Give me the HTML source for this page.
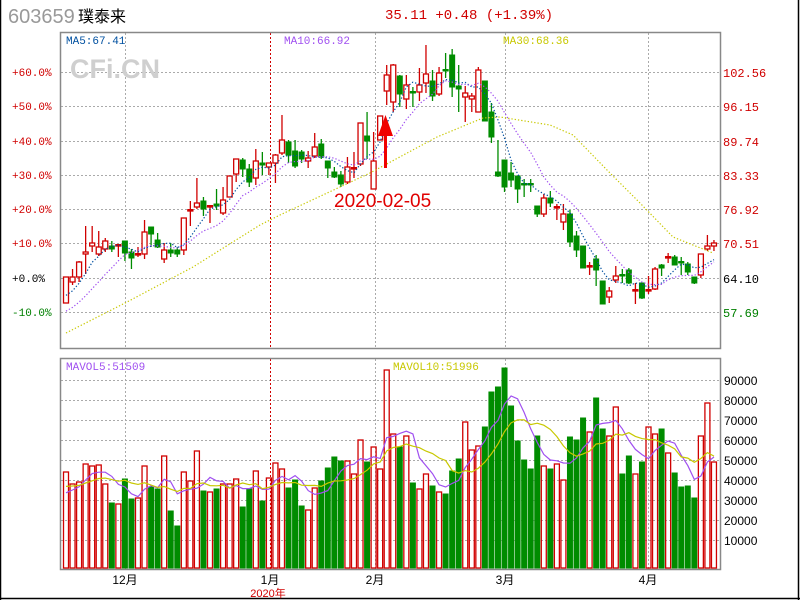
<!DOCTYPE html>
<html><head><meta charset="utf-8"><style>
html,body{margin:0;padding:0;background:#fff;}
body{width:800px;height:600px;overflow:hidden;position:relative;font-family:"Liberation Mono","Noto Sans CJK SC",monospace;}
svg{position:absolute;left:0;top:0;}
</style></head><body>
<svg id="s" width="800" height="600" xmlns="http://www.w3.org/2000/svg">
<rect x="0" y="0" width="800" height="600" fill="#fff"/>
<line x1="0.5" y1="0" x2="0.5" y2="600" stroke="#000" stroke-width="1.5"/>
<line x1="798.5" y1="0" x2="798.5" y2="600" stroke="#000" stroke-width="1.5"/>
<line x1="0" y1="598.5" x2="800" y2="598.5" stroke="#000" stroke-width="1.5"/>
<text x="8" y="23" font-family="Liberation Sans,sans-serif" font-size="20" fill="#999">603659</text>
<text x="78" y="22" font-family="Liberation Sans,'Noto Sans CJK SC',sans-serif" font-size="16" fill="#000">璞泰来</text>
<text x="385" y="19" font-family="Liberation Mono,monospace" font-size="14" fill="#d00000">35.11 +0.48 (+1.39%)</text>
<g id="grid" stroke="#aaa" stroke-dasharray="2 2" stroke-width="1"></g>
<rect x="60.5" y="32.5" width="660" height="316" fill="none" stroke="#888" stroke-width="1.5"/>
<rect x="60.5" y="358.5" width="660" height="211" fill="none" stroke="#888" stroke-width="1.5"/>
<text x="70" y="78" font-family="Liberation Sans,sans-serif" font-weight="bold" font-size="27" fill="#cfcfcf">CFi.CN</text>
<g font-family="Liberation Mono,monospace" font-size="11">
<text x="66" y="44" fill="#0050a0">MA5:67.41</text>
<text x="284" y="44" fill="#a050f0">MA10:66.92</text>
<text x="503" y="44" fill="#c8c800">MA30:68.36</text>
<text x="66" y="370" fill="#a050f0">MAVOL5:51509</text>
<text x="393" y="370" fill="#c8c800">MAVOL10:51996</text>
</g>
<g font-family="Liberation Mono,monospace" font-size="11" fill="#d00000">
<text x="12" y="76">+60.0%</text><text x="12" y="110">+50.0%</text><text x="12" y="145">+40.0%</text>
<text x="12" y="179">+30.0%</text><text x="12" y="213">+20.0%</text><text x="12" y="247">+10.0%</text>
<text x="12" y="282" fill="#000">+0.0%</text><text x="12" y="316" fill="#008000">-10.0%</text>
</g>
<g font-family="Liberation Mono,monospace" font-size="12" fill="#d00000">
<text x="723" y="77">102.56</text><text x="723" y="111">96.15</text><text x="723" y="146">89.74</text>
<text x="723" y="180">83.33</text><text x="723" y="214">76.92</text><text x="723" y="248">70.51</text>
<text x="723" y="283" fill="#000">64.10</text><text x="723" y="317" fill="#008000">57.69</text>
</g>
<g font-family="Liberation Sans,sans-serif" font-size="12" fill="#000">
<text x="724" y="385">90000</text><text x="724" y="405">80000</text><text x="724" y="425">70000</text>
<text x="724" y="445">60000</text><text x="724" y="465">50000</text><text x="724" y="485">40000</text>
<text x="724" y="505">30000</text><text x="724" y="525">20000</text><text x="724" y="545">10000</text>
</g>
<g font-family="Liberation Sans,'Noto Sans CJK SC',sans-serif" font-size="12" fill="#000" text-anchor="middle">
<text x="125" y="584">12月</text><text x="270" y="584">1月</text><text x="375" y="584">2月</text>
<text x="505" y="584">3月</text><text x="648" y="584">4月</text>
<text x="268" y="597" fill="#d00000" font-size="11">2020年</text>
</g>
<g id="plot"></g>
<text x="334" y="207" font-family="Liberation Sans,sans-serif" font-size="19" fill="#e00000">2020-02-05</text>
<line x1="385.5" y1="168" x2="385.5" y2="130" stroke="#f00000" stroke-width="3"/>
<polygon points="385.5,115 378,136 393,136" fill="#f00000"/>
</svg>
<script>
var NS="http://www.w3.org/2000/svg";
function el(p,t,a){var e=document.createElementNS(NS,t);for(var k in a)e.setAttribute(k,a[k]);p.appendChild(e);return e;}
var g=document.getElementById("grid");
[72,106,141,175,209,243,278,312].forEach(function(y){el(g,"line",{x1:61,x2:720,y1:y+.5,y2:y+.5});});
for(var i=0;i<9;i++){var y=380.5+i*20;el(g,"line",{x1:61,x2:720,y1:y,y2:y});}
[125,375,505,648].forEach(function(x){el(g,"line",{x1:x+.5,x2:x+.5,y1:33,y2:348});el(g,"line",{x1:x+.5,x2:x+.5,y1:359,y2:569});});
el(g,"line",{x1:270.5,x2:270.5,y1:33,y2:348,stroke:"#d00000"});
el(g,"line",{x1:270.5,x2:270.5,y1:359,y2:569,stroke:"#d00000"});
var C="R277,303,277,303 R277,282,269,285 R262,277,261,282 R252,254,226,274 R243,246,226,252 R247,254,231,256 R241,249,238,252 G246,249,241,252 R245,245,245,257 G241,253,241,261 G252,258,249,269 R254,254,247,257 R232,254,220,259 G227,234,227,247 G240,247,233,248 R250,259,243,263 G250,253,243,257 G250,254,247,257 R218,250,218,255 R210,210,201,226 R203,207,178,209 G201,209,197,216 R206,207,206,223 G204,206,189,210 R200,213,187,215 R176,197,176,197 R159,174,159,182 G160,169,158,177 G169,182,164,187 R161,178,149,185 G163,165,152,175 R163,167,163,175 R155,163,154,183 R140,153,115,155 G142,155,140,163 G151,166,140,168 G152,159,150,163 R158,161,151,168 R147,156,133,158 G144,157,139,159 G161,168,161,178 G172,177,167,178 G175,184,171,187 R167,182,157,184 R168,168,152,178 R123,164,123,166 G136,141,112,159 R161,189,132,189 R116,140,116,140 R75,91,65,105 R65,102,64,112 G76,94,75,107 R85,99,75,109 G92,92,87,107 R85,92,68,101 R74,83,45,93 G81,96,70,101 R73,94,67,96 G70,70,53,78 G55,87,49,97 G86,89,65,112 R93,97,86,122 R96,99,93,112 R70,112,67,112 G81,121,81,121 G112,137,103,143 G172,176,140,177 G160,187,160,192 G173,180,162,187 G176,189,176,203 G184,184,179,197 G184,184,179,192 G206,214,206,217 R198,214,194,217 G198,203,191,207 R207,207,204,220 R214,222,204,230 G214,242,210,247 G236,250,231,257 G246,268,246,268 R266,266,262,275 G259,270,255,286 G281,304,281,304 R291,297,287,303 R276,280,266,283 G275,275,269,283 G270,283,268,284 R290,290,283,304 G283,298,283,299 R290,290,276,294 R269,289,267,290 G265,268,264,276 R257,257,253,263 G257,265,255,265 G262,262,257,275 G264,272,262,275 G277,283,277,284 R254,275,254,278 R246,249,235,251 R243,246,240,251".split(" ");
var V=[472,484,482,464,466,465,484,503,504,479,499,498,466,487,489,456,511,526,472,481,451,491,492,489,484,484,479,507,489,471,501,478,463,469,488,480,506,510,488,481,468,457,461,461,474,440,462,447,469,370,434,447,436,483,489,474,486,492,494,471,459,422,450,446,427,392,387,368,406,441,460,469,436,466,469,464,480,437,440,418,432,398,429,436,407,474,456,474,462,427,434,429,453,473,487,486,498,436,403,462];
var P=document.getElementById("plot");
var RED="#d00000",GRN="#008c00",closes=[];
function X(i){return 66+i*6.545;}
C.forEach(function(s,i){
 var red=s[0]=="R",a=s.slice(1).split(",").map(Number),x=X(i),col=red?RED:GRN;
 closes.push(red?a[0]:a[1]);
 el(P,"line",{x1:x,x2:x,y1:a[2],y2:a[3],stroke:col,"stroke-width":1.3});
 var h=Math.max(a[1]-a[0],1);
 if(red) el(P,"rect",{x:x-2.5,y:a[0],width:5,height:h,fill:"#fff",stroke:col,"stroke-width":1.3});
 else el(P,"rect",{x:x-3,y:a[0]-.5,width:6,height:h+1,fill:col});
 if(a[1]-a[0]<2) el(P,"line",{x1:x-3,x2:x+3,y1:a[0],y2:a[0],stroke:col,"stroke-width":2});
 var vt=V[i]!==undefined?V[i]:480;
 if(red) el(P,"rect",{x:x-2.5,y:vt,width:5,height:568-vt,fill:"none",stroke:col,"stroke-width":1.3});
 else el(P,"rect",{x:x-3,y:vt-.5,width:6,height:569-vt,fill:col});
});
function ma(arr,n,base){return arr.map(function(v,i){var s=0,c=0;for(var j=Math.max(0,i-n+1);j<=i;j++){s+=arr[j];c++;}var av=s/c;if(base!==undefined&&c<n){av=(s+(n-c)*base)/n;}return av;});}
function poly(pts,col,dash,w){el(P,"polyline",{points:pts.map(function(y,i){return X(i).toFixed(1)+","+y.toFixed(1);}).join(" "),fill:"none",stroke:col,"stroke-width":w||1.2,"stroke-dasharray":dash||"none"});}
poly(ma(closes,5,300),"#0050a0","1.3 2");
poly(ma(closes,10,315),"#a050f0","1.3 2");
el(P,"polyline",{points:"66,333 127,302 193,267 260,225 280,215 370,173 437,137 483,118 500,117 550,125 573,135 607,170 640,203 673,237 713,253",fill:"none",stroke:"#c8c800","stroke-width":1.2,"stroke-dasharray":"1.3 2"});
var vol=V.map(function(t){return 568-t;});
poly(ma(vol,5,70).map(function(v){return 568-v;}),"#a050f0");
poly(ma(vol,10,80).map(function(v){return 568-v;}),"#c8c800");
</script>
</body></html>
